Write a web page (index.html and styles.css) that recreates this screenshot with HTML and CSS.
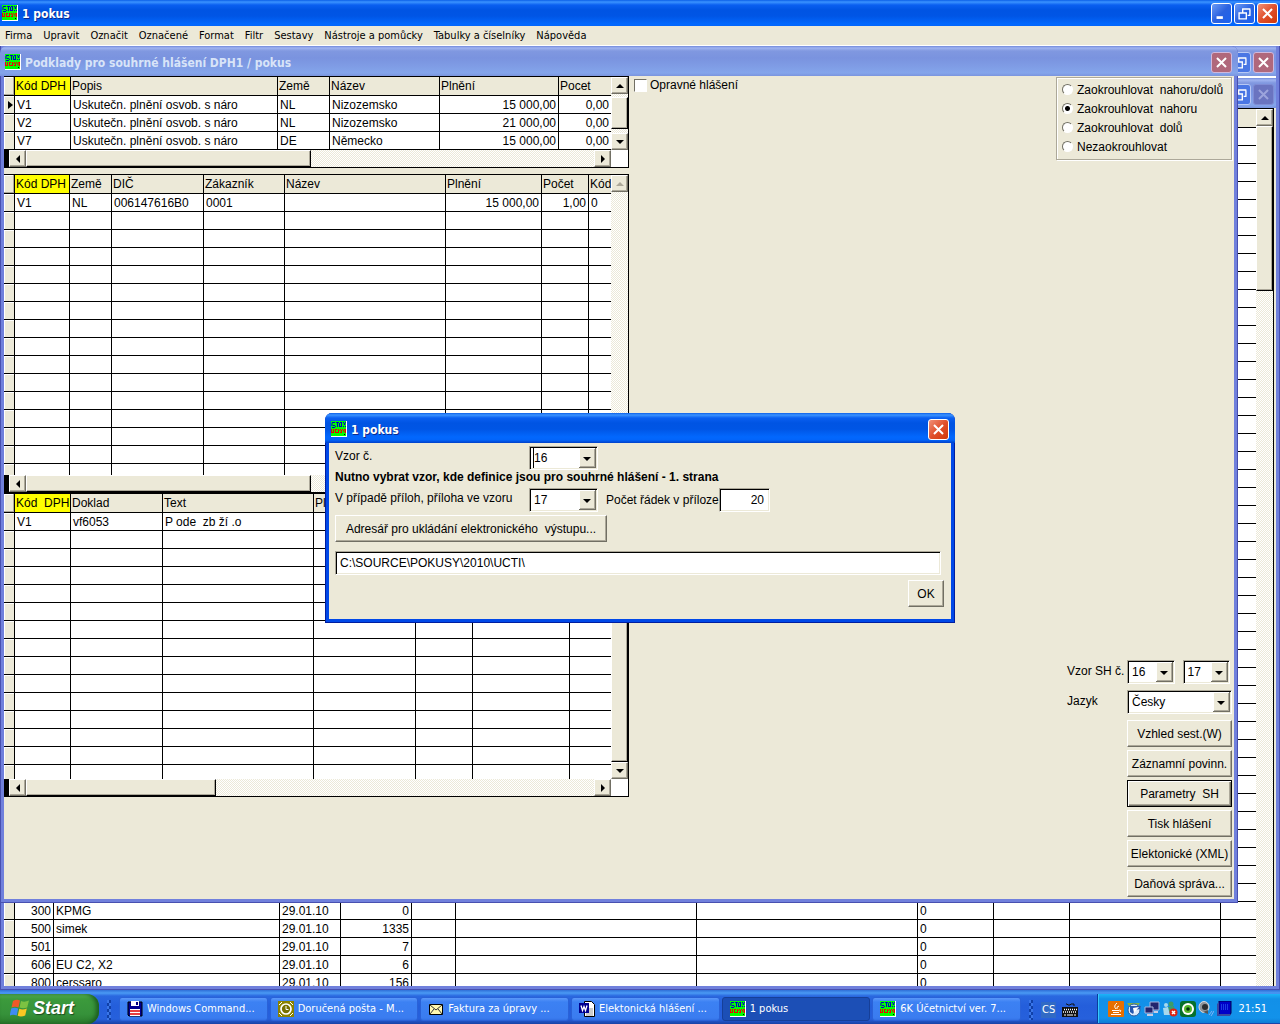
FILE: index.html
```html
<!DOCTYPE html>
<html lang="cs">
<head>
<meta charset="utf-8">
<title>1 pokus</title>
<link rel="stylesheet" href="styles.css">
</head>
<body>
<svg class="defs" aria-hidden="true">
  <symbol id="app" viewBox="0 0 16 16">
    <rect width="16" height="16" fill="#fff"/><rect width="15" height="15" fill="#0f0"/>
    <path d="M1 1.500h3M1 2v3M2 4.500h2M4 5.500h1M5 1.500h3M6.500 2v4M9 1.500h2M8.500 2v4M10.500 2v4M9 5.500h2M12 1.500h1M14.500 1v1M13 2.500h1v1h-1zM12 5.500h1M14.500 5v1M1 6.500h3" stroke="#0000c8" fill="none"/>
    <path d="M.5 8v4M1 11.500h2M2.500 8v3M4 8.500h2M4.500 9v3M5 11.500h2M7.500 8v4M8.500 9.500h1M9.500 8v1M9.500 11v1M11 8.500h1M10.500 9v3M12 9.500h1v2M14.500 8v4M13.500 8v1" stroke="#f00000" fill="none"/>
    <path d="M13 13.500h1" stroke="#000"/>
  </symbol>
  <symbol id="close" viewBox="0 0 21 21"><path d="M5.500 5.500l10 10M15.500 5.500l-10 10" stroke="currentColor" stroke-width="2.200" fill="none"/></symbol>
  <symbol id="restore" viewBox="0 0 21 21"><path d="M8 5.500h9M8.500 5v4M16.500 6v7M14 12.500h3M4 10h9M4.500 9v8M12.500 9v8M4 16.500h9" stroke="currentColor" stroke-width="1.500" fill="none"/></symbol>
  <symbol id="minimize" viewBox="0 0 21 21"><path d="M5 15h7" stroke="currentColor" stroke-width="3"/></symbol>
</svg>

<header class="titlebar titlebar-main">
  <svg class="app-icon"><use href="#app"/></svg>
  <h1 class="title">1 pokus</h1>
  <button class="caption-btn" aria-label="Minimalizovat"><svg><use href="#minimize"/></svg></button>
  <button class="caption-btn" aria-label="Obnovit"><svg><use href="#restore"/></svg></button>
  <button class="caption-btn caption-close" aria-label="Zavřít"><svg><use href="#close"/></svg></button>
</header>

<nav class="menubar">
  <a href="#">Firma</a><a href="#">Upravit</a><a href="#">Označit</a><a href="#">Označené</a><a href="#">Format</a><a href="#">Filtr</a><a href="#">Sestavy</a><a href="#">Nástroje a pomůcky</a><a href="#">Tabulky a číselníky</a><a href="#">Nápověda</a>
</nav>

<main class="workspace">
  <section class="back-window">
    <div class="titlebar titlebar-inactive">
      <span class="title"></span>
      <button class="caption-btn" aria-label="Obnovit"><svg><use href="#restore"/></svg></button>
      <button class="caption-btn caption-close" aria-label="Zavřít"><svg><use href="#close"/></svg></button>
    </div>
    <div class="titlebar titlebar-inactive titlebar-child">
      <span class="title"></span>
      <button class="caption-btn" aria-label="Obnovit"><svg><use href="#restore"/></svg></button>
      <button class="caption-btn caption-disabled" aria-label="Zavřít" disabled><svg><use href="#close"/></svg></button>
    </div>
    <div class="grid grid-back">
      <div class="grid-body">
        <table data-blank-before="43">
          <colgroup><col class="w11"><col class="w39"><col class="w226"><col class="w61"><col class="w71"><col class="w44"><col class="w241"><col class="w221"><col class="w76"><col class="w76"><col class="w151"><col></colgroup>
          <thead><tr><th></th><th></th><th></th><th></th><th></th><th></th><th></th><th></th><th></th><th></th><th></th><th></th></tr></thead>
          <tbody>
            <tr><td></td><td class="num">300</td><td>KPMG</td><td>29.01.10</td><td class="num">0</td><td></td><td></td><td></td><td>0</td><td></td><td></td><td></td></tr>
            <tr><td></td><td class="num">500</td><td>simek</td><td>29.01.10</td><td class="num">1335</td><td></td><td></td><td></td><td>0</td><td></td><td></td><td></td></tr>
            <tr><td></td><td class="num">501</td><td></td><td>29.01.10</td><td class="num">7</td><td></td><td></td><td></td><td>0</td><td></td><td></td><td></td></tr>
            <tr><td></td><td class="num">606</td><td>EU C2, X2</td><td>29.01.10</td><td class="num">6</td><td></td><td></td><td></td><td>0</td><td></td><td></td><td></td></tr>
            <tr><td></td><td class="num">800</td><td>cerssaro</td><td>29.01.10</td><td class="num">156</td><td></td><td></td><td></td><td>0</td><td></td><td></td><td></td></tr>
          </tbody>
        </table>
      </div>
      <div class="vscroll">
        <button class="arrow up" aria-label="Nahoru"></button>
        <span class="thumb thumb-back"></span>
      </div>
    </div>
  </section>

  <section class="front-window">
    <div class="titlebar titlebar-inactive">
      <svg class="app-icon"><use href="#app"/></svg>
      <h2 class="title">Podklady pro souhrné hlášení DPH1 / pokus</h2>
      <button class="caption-btn caption-close" aria-label="Zavřít"><svg><use href="#close"/></svg></button>
    </div>
    <div class="front-content">
      <div class="grids">
        <div class="grid grid-summary">
          <div class="grid-body">
            <table data-blank-after="1">
              <colgroup><col class="w11"><col class="w56"><col class="w207"><col class="w52"><col class="w110"><col class="w119"><col></colgroup>
              <thead><tr><th></th><th class="key">Kód DPH</th><th>Popis</th><th>Země</th><th>Název</th><th>Plnění</th><th>Pocet</th></tr></thead>
              <tbody>
                <tr class="current"><td></td><td>V1</td><td>Uskutečn. plnění osvob. s náro</td><td>NL</td><td>Nizozemsko</td><td class="num">15 000,00</td><td class="num">0,00</td></tr>
                <tr><td></td><td>V2</td><td>Uskutečn. plnění osvob. s náro</td><td>NL</td><td>Nizozemsko</td><td class="num">21 000,00</td><td class="num">0,00</td></tr>
                <tr><td></td><td>V7</td><td>Uskutečn. plnění osvob. s náro</td><td>DE</td><td>Německo</td><td class="num">15 000,00</td><td class="num">0,00</td></tr>
              </tbody>
            </table>
          </div>
          <div class="vscroll">
            <button class="arrow up" aria-label="Nahoru"></button>
            <span class="thumb thumb-summary"></span>
            <button class="arrow down end" aria-label="Dolů"></button>
          </div>
          <div class="hscroll">
            <button class="arrow left" aria-label="Doleva"></button>
            <span class="thumb thumb-wide"></span>
            <button class="arrow right end" aria-label="Doprava"></button>
          </div>
          <div class="corner"></div>
        </div>

        <div class="grid grid-customers">
          <div class="grid-body">
            <table data-blank-after="15">
              <colgroup><col class="w11"><col class="w55"><col class="w42"><col class="w92"><col class="w81"><col class="w161"><col class="w96"><col class="w47"><col></colgroup>
              <thead><tr><th></th><th class="key">Kód DPH</th><th>Země</th><th>DIČ</th><th>Zákazník</th><th>Název</th><th>Plnění</th><th>Počet</th><th>Kód</th></tr></thead>
              <tbody>
                <tr><td></td><td>V1</td><td>NL</td><td>006147616B0</td><td>0001</td><td></td><td class="num">15 000,00</td><td class="num">1,00</td><td>0</td></tr>
              </tbody>
            </table>
          </div>
          <div class="vscroll">
            <button class="arrow up" aria-label="Nahoru" disabled></button>
          </div>
          <div class="hscroll">
            <button class="arrow left" aria-label="Doleva"></button>
            <span class="thumb thumb-wide"></span>
            <button class="arrow right end" aria-label="Doprava"></button>
          </div>
          <div class="corner"></div>
        </div>

        <div class="grid grid-documents">
          <div class="grid-body">
            <table data-blank-after="14">
              <colgroup><col class="w11"><col class="w56"><col class="w92"><col class="w151"><col class="w102"><col class="w57"><col class="w97"><col></colgroup>
              <thead><tr><th></th><th class="key">Kód&nbsp; DPH</th><th>Doklad</th><th>Text</th><th>Pl</th><th></th><th></th><th></th></tr></thead>
              <tbody>
                <tr><td></td><td>V1</td><td>vf6053</td><td>P ode&nbsp; zb ží .o</td><td></td><td></td><td></td><td></td></tr>
              </tbody>
            </table>
          </div>
          <div class="vscroll">
            <button class="arrow up" aria-label="Nahoru"></button>
            <span class="thumb thumb-fill"></span>
            <button class="arrow down" aria-label="Dolů"></button>
          </div>
          <div class="hscroll">
            <button class="arrow left" aria-label="Doleva"></button>
            <span class="thumb thumb-narrow"></span>
            <button class="arrow right end" aria-label="Doprava"></button>
          </div>
          <div class="corner"></div>
        </div>
      </div>

      <div class="options">
        <div class="options-top">
          <label class="check"><input type="checkbox">Opravné hlášení</label>
          <fieldset class="rounding">
            <label><input type="radio" name="rounding">Zaokrouhlovat&nbsp; nahoru/dolů</label>
            <label><input type="radio" name="rounding" checked>Zaokrouhlovat&nbsp; nahoru</label>
            <label><input type="radio" name="rounding">Zaokrouhlovat&nbsp; dolů</label>
            <label><input type="radio" name="rounding">Nezaokrouhlovat</label>
          </fieldset>
        </div>
        <div class="actions">
          <div class="action-row">
            <label for="vzor-sh">Vzor SH č.</label>
            <div class="select-pair">
              <select id="vzor-sh" class="field"><option>16</option></select>
              <select class="field" aria-label="Vzor SH č. přílohy"><option>17</option></select>
            </div>
          </div>
          <div class="action-row">
            <label for="jazyk">Jazyk</label>
            <select id="jazyk" class="field"><option>Česky</option></select>
          </div>
          <div class="button-stack">
            <button class="btn">Vzhled sest.(W)</button>
            <button class="btn">Záznamní povinn.</button>
            <button class="btn btn-default">Parametry&nbsp; SH</button>
            <button class="btn">Tisk hlášení</button>
            <button class="btn">Elektonické (XML)</button>
            <button class="btn">Daňová správa...</button>
          </div>
        </div>
      </div>
    </div>
  </section>

  <section class="dialog" role="dialog" aria-label="1 pokus">
    <div class="titlebar titlebar-dialog">
      <svg class="app-icon"><use href="#app"/></svg>
      <h2 class="title">1 pokus</h2>
      <button class="caption-btn caption-close" aria-label="Zavřít"><svg><use href="#close"/></svg></button>
    </div>
    <form class="dialog-body">
      <div class="dialog-row">
        <label for="vzor">Vzor č.</label>
        <select id="vzor" class="field with-caret"><option>16</option></select>
      </div>
      <p class="note">Nutno vybrat vzor, kde definice jsou pro souhrné hlášení - 1. strana</p>
      <div class="dialog-row">
        <label for="priloha">V případě příloh, příloha ve vzoru</label>
        <select id="priloha" class="field"><option>17</option></select>
        <label for="radky" class="rows-label">Počet řádek v příloze</label>
        <input id="radky" class="field rows-input" value="20">
      </div>
      <button type="button" class="btn folder-btn">Adresář pro ukládání elektronického&nbsp; výstupu...</button>
      <input class="field path-input" aria-label="Adresář" value="C:\SOURCE\POKUSY\2010\UCTI\">
      <button type="button" class="btn ok-btn">OK</button>
    </form>
  </section>
</main>

<footer class="taskbar">
  <button class="start">
    <svg class="flag" viewBox="0 0 20 20"><path d="M3 3q3.500-2 7-.5L8.500 9.500Q5 8 1.500 9.500z" fill="#f0592a"/><path d="M11 3q3.500 1.500 8-.5l-1.800 7Q13 11 9.500 9.500z" fill="#7cc242"/><path d="M1.200 10.500q3.500-1.500 7 0l-1.500 7q-3.500-1.500-7 0z" fill="#3f8cf3"/><path d="M9.300 10.800q3.500 1.500 7.500-.3l-1.600 7q-4 1.800-7.500.3z" fill="#fdc723"/></svg>
    Start
  </button>
  <span class="grip"></span>
  <div class="tasks">
    <button class="task"><svg viewBox="0 0 16 16"><path d="M1 1h14v14H2l-1-1z" fill="#000090" stroke="#000"/><path d="M4 0h8v5H4z" fill="#fff"/><path d="M9 1h2v3H9z" fill="#000080"/><path d="M3 8h10v7H3z" fill="#fff"/><path d="M3 10h10M3 13h10" stroke="#e00000" stroke-width="1.500"/></svg>Windows Command...</button>
    <button class="task"><svg viewBox="0 0 16 16"><path d="M0 0h16v16H0z" fill="#8a8200"/><circle cx="8" cy="8" r="5" fill="#777000" stroke="#fff" stroke-width="1.700"/><path d="M8 5v3.500h2.500M1 4l3-3M15 4l-3-3M1 12l3 3M15 12l-3 3" stroke="#fff" fill="none"/></svg>Doručená pošta - M...</button>
    <button class="task"><svg viewBox="0 0 16 16"><path d="M1.500 3.500h13v10h-13z" fill="#fff8b0" stroke="#000"/><path d="M2 4l6 5 6-5M2 13l4-5M14 13l-4-5" stroke="#333" fill="none"/></svg>Faktura za úpravy ...</button>
    <button class="task"><svg viewBox="0 0 16 16"><path d="M5.500.5h7l3 3v12h-10z" fill="#fff" stroke="#000"/><path d="M7 8h7M7 10h7M7 12h7M7 14h7" stroke="#999"/><path d="M0 2h10v10H0z" fill="#000090"/><path d="M2 4.500l1.500 5L5 5.500l1.500 4L8 4.500" stroke="#fff" stroke-width="1.300" fill="none"/></svg>Elektonická hlášení ...</button>
    <button class="task task-active"><svg><use href="#app"/></svg>1 pokus</button>
    <button class="task"><svg><use href="#app"/></svg>6K Účetnictví ver. 7...</button>
  </div>
  <span class="grip"></span>
  <div class="language">
    <span class="lang">CS</span>
    <svg viewBox="0 0 16 16"><path d="M4 2h1l1 1h2l1-1h3v2" stroke="#111" fill="none"/><path d="M0 5h16v10H0z" fill="#111"/><path d="M2 7.500h13M1 10h13" stroke="#fff" stroke-width="1.500" stroke-dasharray="1 1"/><path d="M2 13h2M5 13h6M12 13h2" stroke="#fff"/></svg>
  </div>
  <div class="tray">
    <svg viewBox="0 0 16 16"><rect width="16" height="16" rx="1" fill="#e76f00"/><path d="M9 2Q5 5 8 8M11 5Q8 6 9 8M4 9.500h7M5 11.500h6M3 13.500h10M11 9q3 0 1 2" stroke="#fff" fill="none"/></svg>
    <svg viewBox="0 0 16 16"><path d="M1 2h13l-2 3H3z" fill="#7fae4a"/><circle cx="8" cy="9" r="6" fill="#dbeafb" stroke="#2b5d9d"/><path d="M4 5h11l-1 3-5 1-2 4-3-2z" fill="#2458b0"/><path d="M7 7l6-1-5 6z" fill="#fff"/></svg>
    <svg viewBox="0 0 16 16"><path d="M6 1h9v8H6z" fill="#23246c" stroke="#aab4dc"/><path d="M1 6h8v6H1z" fill="#23246c" stroke="#aab4dc"/><path d="M3 14h6M10 11h4" stroke="#c8cde4" stroke-width="2"/></svg>
    <svg viewBox="0 0 16 16"><circle cx="9" cy="3" r="2.500" fill="#3d9d68"/><circle cx="4" cy="4" r="2" fill="#a8d8ec"/><path d="M6 6l6-1 1 6H7z" fill="#3d9d68"/><path d="M1 7l5-1 2 8H2z" fill="#a8d8ec"/><circle cx="11.500" cy="11.500" r="4" fill="#dc2418"/><path d="M10 10l3 3M13 10l-3 3" stroke="#fff" stroke-width="1.500"/></svg>
    <svg viewBox="0 0 16 16"><rect width="16" height="16" rx="3" fill="#06702c"/><circle cx="8" cy="8" r="6" fill="#fff"/><circle cx="8" cy="8" r="4" fill="#55b52a"/><circle cx="8" cy="8" r="1.800" fill="#02300c"/></svg>
    <svg viewBox="0 0 16 16"><ellipse cx="6" cy="6" rx="5" ry="5.500" fill="#8e949a" stroke="#ddd"/><circle cx="7" cy="6" r="3" fill="#2a2d30"/><path d="M5 11l5 2V9" fill="#555"/><path d="M11 14l3-4M13 15l3-5" stroke="#7fb2f5"/></svg>
    <svg viewBox="0 0 16 16"><path d="M3 0h12v12l-1 2H3z" fill="#0000c8" stroke="#000050"/><path d="M1 3l2-2v12l-2 2zM1 15l2-2h12l-1 2z" fill="#3848a0"/><path d="M5 4h8M5 6h8M5 8h8" stroke="#3878ff" stroke-dasharray="1 1"/></svg>
    <time>21:51</time>
  </div>
</footer>
<script src="script.js"></script>
</body>
</html>
```

FILE: styles.css
```css
* { box-sizing: border-box; }

:root {
  --face: #ece9d8;
  --shadow: #aca899;
  --dark: #716f64;
  --ui: "DejaVu Sans Condensed", "Noto Sans", sans-serif;
}

body {
  margin: 0;
  height: 100vh;
  display: flex;
  flex-direction: column;
  overflow: hidden;
  background: var(--face);
  font: 12px/16px "Liberation Sans", Arial, sans-serif;
  color: #000;
}

button, input, select { font: inherit; color: inherit; border-radius: 0; margin: 0; }
.defs { display: none; }

/* Title bars */
.titlebar {
  display: flex;
  align-items: center;
  gap: 2px;
  height: 30px;
  padding: 2px 6px 0 5px;
  background: linear-gradient(#0b5fe8 0, #3b93ff 2px, #0a5ff0 5px, #0054e3 10px, #0055e5 16px, #0268fe 24px, #0264fa 27px, #0040c8 100%);
  color: #fff;
}
.titlebar-main { height: 26px; padding: 0 2px; }
.titlebar-inactive {
  background: linear-gradient(#7089dc 0, #a0b4f0 2px, #8098e0 5px, #7a93df 12px, #7f9ce5 20px, #84a5eb 27px, #7a94de 100%);
  color: #d8e4f8;
}
.app-icon { width: 16px; height: 16px; flex: none; }
.title {
  flex: 1;
  margin: 0 0 0 2px;
  padding-top: 2px;
  font: bold 12px/18px var(--ui);
  text-shadow: 1px 1px #0a2a90;
}
.titlebar-inactive .title { text-shadow: none; }
.caption-btn {
  width: 21px;
  height: 21px;
  padding: 0;
  border: 1px solid #fff;
  border-radius: 3px;
  background: linear-gradient(135deg, #6d9bf5, #2a62e0 50%, #1b62f0);
  color: #fff;
}
.caption-btn svg { display: block; width: 19px; height: 19px; }
.caption-close { background: linear-gradient(135deg, #f09078, #e0502c 50%, #d03808); }
.titlebar-inactive .caption-btn { border-color: #b8c8f4; background: #4a76e4; }
.titlebar-inactive .caption-close { background: #b0687c; border-color: #d0b8dc; }
.titlebar-inactive .caption-disabled { background: #6a74c0; border-color: #7f8cd4; color: #9ca4dc; }

/* Menu */
.menubar {
  display: flex;
  gap: 11px;
  height: 20px;
  padding: 0 5px;
  border-bottom: 1px solid #fff;
  font: 11px/19px var(--ui);
}
.menubar a { color: #000; text-decoration: none; }

.workspace { flex: 1; position: relative; min-height: 0; background: #fff; }

/* Windows: dark outer line, lighter frame inside it */
.back-window {
  position: absolute;
  inset: 0;
  display: flex;
  flex-direction: column;
  padding: 0 3px 3px;
  border: solid #4850b0;
  border-width: 0 1px 1px;
  background: #7080dc;
}
.back-window .titlebar { padding-right: 2px; flex: none; }
.titlebar-child { border-top: 2px solid #fff; height: 32px; }
.front-window {
  position: absolute;
  inset: 0 42px 87px 0;
  display: flex;
  flex-direction: column;
  padding: 0 3px 3px;
  border: solid #4850b0;
  border-width: 0 1px 1px;
  border-radius: 0 7px 0 0;
  background: #7080dc;
}
.front-window .titlebar, .dialog .titlebar { margin: 0 -4px; border-radius: 7px 7px 0 0; flex: none; }
.front-content { flex: 1; display: flex; min-height: 0; background: var(--face); }

/* Data grids */
.grids { flex: none; width: 625px; }
.grid {
  display: grid;
  grid-template-columns: 1fr 17px;
  border: solid #000;
  border-width: 1px 1px 0 0;
  background: #fff;
}
.grid-summary { grid-template-rows: 73px 18px; margin-bottom: 6px; }
.grid-customers { grid-template-rows: 300px 18px; }
.grid-documents { grid-template-rows: 285px 18px; }
.grid-back { flex: 1; min-height: 0; margin-right: 2px; grid-template-rows: minmax(0, 1fr); box-shadow: 2px 0 var(--face); }
.grid-body { overflow: hidden; }
.grid table { width: 100%; table-layout: fixed; border-collapse: separate; border-spacing: 0; }
.grid th, .grid td {
  height: 18px;
  padding: 1px 2px 0;
  border: solid #000;
  border-width: 0 1px 1px 0;
  font-weight: normal;
  line-height: 16px;
  text-align: left;
  white-space: nowrap;
  overflow: hidden;
}
.grid th { height: 19px; padding: 1px 1px 0; line-height: 17px; background: var(--face); }
.grid th:last-child, .grid td:last-child { border-right: 0; }
.grid td:first-child { background: var(--face); box-shadow: inset 1px 1px #fff; }
.grid th:first-child { box-shadow: inset -1px -1px var(--shadow), inset 1px 1px #fff; }
.grid .key { background: #ff0; }
.grid .num { text-align: right; }
.current td:first-child::before {
  content: "";
  display: block;
  margin-left: 2px;
  width: 0;
  border: solid transparent;
  border-width: 4px 0 4px 5px;
  border-left-color: #000;
}
.w11 { width: 11px; } .w39 { width: 39px; } .w42 { width: 42px; } .w44 { width: 44px; }
.w47 { width: 47px; } .w52 { width: 52px; } .w55 { width: 55px; } .w56 { width: 56px; }
.w57 { width: 57px; } .w61 { width: 61px; } .w71 { width: 71px; } .w76 { width: 76px; }
.w81 { width: 81px; } .w92 { width: 92px; } .w96 { width: 96px; } .w97 { width: 97px; }
.w102 { width: 102px; } .w110 { width: 110px; } .w119 { width: 119px; } .w151 { width: 151px; }
.w161 { width: 161px; } .w207 { width: 207px; } .w221 { width: 221px; } .w226 { width: 226px; }
.w241 { width: 241px; }

/* Scroll bars */
.vscroll, .hscroll {
  display: flex;
  background: repeating-conic-gradient(#fff 0 25%, var(--face) 0 50%) 0 0 / 2px 2px;
}
.vscroll { flex-direction: column; }
.hscroll { border: solid #000; border-width: 0 0 1px 5px; }
.corner { background: #fff; border-bottom: 1px solid #000; }
.arrow, .thumb, .btn {
  border: 1px solid;
  border-color: #fff var(--dark) var(--dark) #fff;
  background: var(--face);
  box-shadow: inset -1px -1px var(--shadow);
}
.arrow { display: flex; align-items: center; justify-content: center; flex: none; width: 17px; height: 17px; padding: 0; }
.arrow::before { content: ""; border: 4px solid transparent; }
.up::before { border-top: 0; border-bottom-color: #000; }
.down::before { border-bottom: 0; border-top-color: #000; }
.left::before { border-left: 0; border-right-color: #000; }
.right::before { border-right: 0; border-left-color: #000; }
.up:disabled::before { border-bottom-color: var(--shadow); }
.vscroll .end { margin-top: auto; }
.hscroll .end { margin-left: auto; }
.thumb { border-right-color: #000; border-bottom-color: #000; }
.thumb-summary { height: 32px; margin-top: 3px; }
.thumb-wide { width: 285px; }
.thumb-narrow { width: 190px; }
.thumb-fill { flex: 1; }
.thumb-back { height: 165px; }

/* Controls */
.btn { height: 27px; padding: 0 2px; white-space: nowrap; }
.btn-default { border-color: #000; box-shadow: inset 1px 1px #fff, inset -1px -1px var(--dark), inset -2px -2px var(--shadow); }
.field {
  height: 24px;
  padding: 0 5px 0 4px;
  appearance: none;
  border: 1px solid;
  border-color: var(--shadow) #fff #fff var(--shadow);
  box-shadow: inset 1px 1px #000, inset -1px -1px var(--face);
  background: #fff;
  outline: 0;
}
select.field {
  background: #fff url("data:image/svg+xml,%3Csvg xmlns='http://www.w3.org/2000/svg' width='17' height='20'%3E%3Cpath d='M0 0h17v20H0z' fill='%23716f64'/%3E%3Cpath d='M0 0h16v19H0z' fill='%23fff'/%3E%3Cpath d='M1 1h15v18H1z' fill='%23aca899'/%3E%3Cpath d='M1 1h14v17H1z' fill='%23ece9d8'/%3E%3Cpath d='M4 9h8l-4 4z'/%3E%3C/svg%3E") no-repeat right 1px top 1px;
}

.options { flex: 1; display: flex; flex-direction: column; justify-content: space-between; padding: 1px 2px 2px 5px; }
.options-top { display: flex; justify-content: space-between; align-items: flex-start; }
.check, .rounding label { display: flex; align-items: center; }
.check { gap: 3px; }
.check input {
  appearance: none;
  width: 13px;
  height: 13px;
  border: 1px solid;
  border-color: var(--dark) #fff #fff var(--dark);
  background: #fff;
}
.rounding {
  width: 176px;
  margin: 0;
  padding: 2px 5px 3px;
  border: 1px solid var(--shadow);
  box-shadow: 1px 1px #fff, inset 1px 1px #fff;
}
.rounding label { gap: 4px; height: 19px; white-space: nowrap; }
.rounding input {
  appearance: none;
  flex: none;
  width: 11px;
  height: 11px;
  border: 1px solid;
  border-color: var(--dark) #fff #fff var(--dark);
  border-radius: 50%;
  background: #fff;
}
.rounding input:checked { background: radial-gradient(#000 2px, #fff 3px); }

.actions { align-self: flex-end; width: 165px; display: flex; flex-direction: column; gap: 6px; }
.action-row { display: grid; grid-template-columns: 60px 1fr; }
.action-row label { padding-top: 3px; white-space: nowrap; }
.select-pair { display: grid; grid-template-columns: 1fr 1fr; gap: 8px; padding-right: 2px; }
.button-stack { display: grid; gap: 3px; padding-left: 60px; }

/* Dialog */
.dialog {
  position: absolute;
  top: 367px;
  left: calc(50% - 315px);
  width: 630px;
  padding: 0 3px 3px;
  border: solid #001ea0;
  border-width: 0 1px 1px;
  border-radius: 7px 7px 0 0;
  background: #0048e8;
}
.titlebar-dialog { padding-left: 6px; }
.dialog-body { display: flex; flex-direction: column; align-items: flex-start; padding: 3px 6px 12px; background: var(--face); }
.dialog-row { display: flex; align-items: flex-start; }
.dialog-row label { padding-top: 2px; width: 194px; white-space: nowrap; }
.dialog-row select { width: 69px; }
.dialog-row .rows-label { width: 113px; margin-left: 8px; padding-top: 4px; }
.rows-input { width: 51px; text-align: right; }
.with-caret { box-shadow: inset 1px 1px #000, inset -1px -1px var(--face), inset 3px 0 #fff, inset 4px 0 #000; }
.note { margin: 0 0 4px; font-weight: bold; line-height: 14px; }
.folder-btn { width: 272px; margin-top: 3px; }
.path-input { width: 100%; max-width: 606px; margin-top: 9px; }
.ok-btn { width: 36px; margin: 5px 1px 0; align-self: flex-end; }

/* Taskbar */
.taskbar {
  display: flex;
  flex: none;
  height: 34px;
  background: linear-gradient(#2f6fd8 0, #4a9af4 3px, #2a68e0 6px, #245edb 16px, #2660dc 29px, #1941a5 100%);
  color: #fff;
  font: 11px/16px var(--ui);
}
.start {
  display: flex;
  align-items: center;
  gap: 3px;
  width: 99px;
  margin-top: 4px;
  padding: 0 0 2px 10px;
  border: 0;
  border-radius: 0 12px 12px 0;
  background: linear-gradient(#5cb85c 0, #3c9a3c 5px, #36923a 20px, #2a7a2c 100%);
  box-shadow: inset -3px 0 4px #1c5c20;
  color: #fff;
  font: italic bold 18px/20px "Liberation Sans", Arial, sans-serif;
  text-shadow: 1px 1px 1px #1c4c20;
}
.flag { width: 20px; height: 20px; }
.grip { width: 4px; margin: 10px 8px 4px; background: repeating-conic-gradient(#1040a8 0 25%, #3a76e8 0 50%) 0 0 / 4px 6px; }
.tasks { flex: 1; display: grid; grid-template-columns: repeat(6, 1fr); gap: 2px; padding: 7px 0 3px; max-width: 902px; min-width: 0; }
.task {
  display: flex;
  align-items: center;
  gap: 4px;
  min-width: 0;
  padding: 0 7px;
  border: 1px solid #2a62d8;
  border-radius: 3px;
  background: linear-gradient(#5a98fa 0, #3c81f3 4px, #3a7cf0 20px, #3270e4 100%);
  white-space: nowrap;
}
.task svg { width: 16px; height: 16px; flex: none; }
.task-active { background: #1c4fb6; border-color: #163f98; }
.language { display: flex; align-items: center; gap: 6px; padding-top: 6px; }
.lang { padding: 0 1px; background: #316ac5; }
.language svg { width: 16px; height: 16px; }
.tray {
  display: flex;
  align-items: center;
  gap: 2px;
  width: 183px;
  margin: 4px 0 1px auto;
  padding: 0 13px 0 10px;
  border-left: 1px solid #0a3d9c;
  background: linear-gradient(#1cb4f8 0, #1290e8 5px, #1292ea 24px, #0f7cd4 100%);
  box-shadow: inset 1px 0 #38c8fc;
}
.tray svg { width: 16px; height: 16px; flex: none; }
.tray time { margin-left: auto; }
```

FILE: script.js
```js
// Pads each grid with empty rows around its records.
document.querySelectorAll('.grid table').forEach(function (table) {
  var body = table.tBodies[0];
  var columns = table.tHead.rows[0].cells.length;

  function blankRow() {
    var row = document.createElement('tr');
    for (var i = 0; i < columns; i++) row.appendChild(document.createElement('td'));
    return row;
  }

  for (var b = 0; b < Number(table.dataset.blankBefore || 0); b++) body.prepend(blankRow());
  for (var a = 0; a < Number(table.dataset.blankAfter || 0); a++) body.append(blankRow());
});
```
